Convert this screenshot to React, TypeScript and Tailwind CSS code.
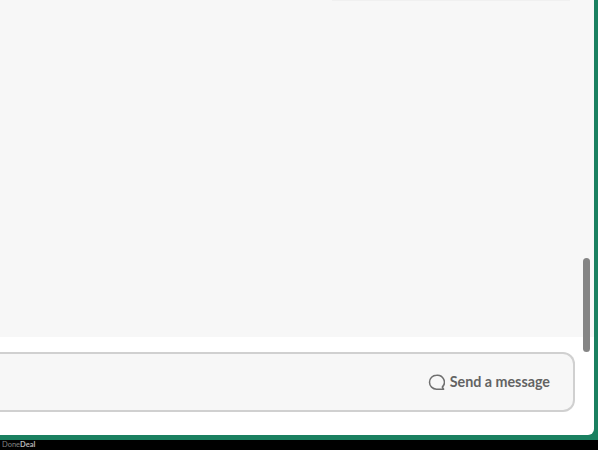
import { useState } from 'react';

function ChatBubbleIcon() {
  return (
    <svg width="17" height="17" viewBox="0 0 17 17" fill="none" className="shrink-0">
      <path
        d="M8.5 1.2a7 7 0 1 0 0 14h7.1l-1.3-2.1a7 7 0 0 0-5.8-11.9Z"
        stroke="#6f6f6f"
        strokeWidth="1.5"
        strokeLinejoin="round"
      />
    </svg>
  );
}

export default function App() {
  const [draft] = useState('Send a message');

  return (
    <div className="flex h-[450px] w-[600px] flex-col overflow-hidden bg-white font-['Lato','Liberation_Sans',sans-serif]">
      <div className="h-[440px] w-[598px] border-b-[5px] border-r-[4px] border-[#1a8060] bg-[#1a8060]">
        <main className="relative flex h-full flex-col rounded-br-[6px] bg-white">
          <section className="flex-1 bg-[#f7f7f7]">
            <div className="ml-[332px] h-px w-[238px] bg-[#f0f0f0]" />
          </section>
          <div className="h-[15px] shrink-0" />
          <div className="mr-[19px] flex h-[60px] shrink-0 items-center justify-end rounded-r-[12px] border-y-2 border-r-2 border-[#d0d0d0] bg-[#f7f7f7] pr-[23px]">
            <button type="button" className="flex items-center gap-[5px] text-[14.3px] font-bold text-[#636363]">
              <ChatBubbleIcon />
              {draft}
            </button>
          </div>
          <div className="h-[23px] shrink-0" />
          <div className="absolute left-[583px] top-[258px] h-[94px] w-[7px] rounded-full bg-[#858585]" />
        </main>
      </div>
      <footer className="flex h-[10px] w-[598px] items-center bg-black pl-[2px] text-[7.5px] leading-none text-[#808080]">
        Done<span className="font-bold text-[#b8b8b8]">Deal</span>
      </footer>
    </div>
  );
}
